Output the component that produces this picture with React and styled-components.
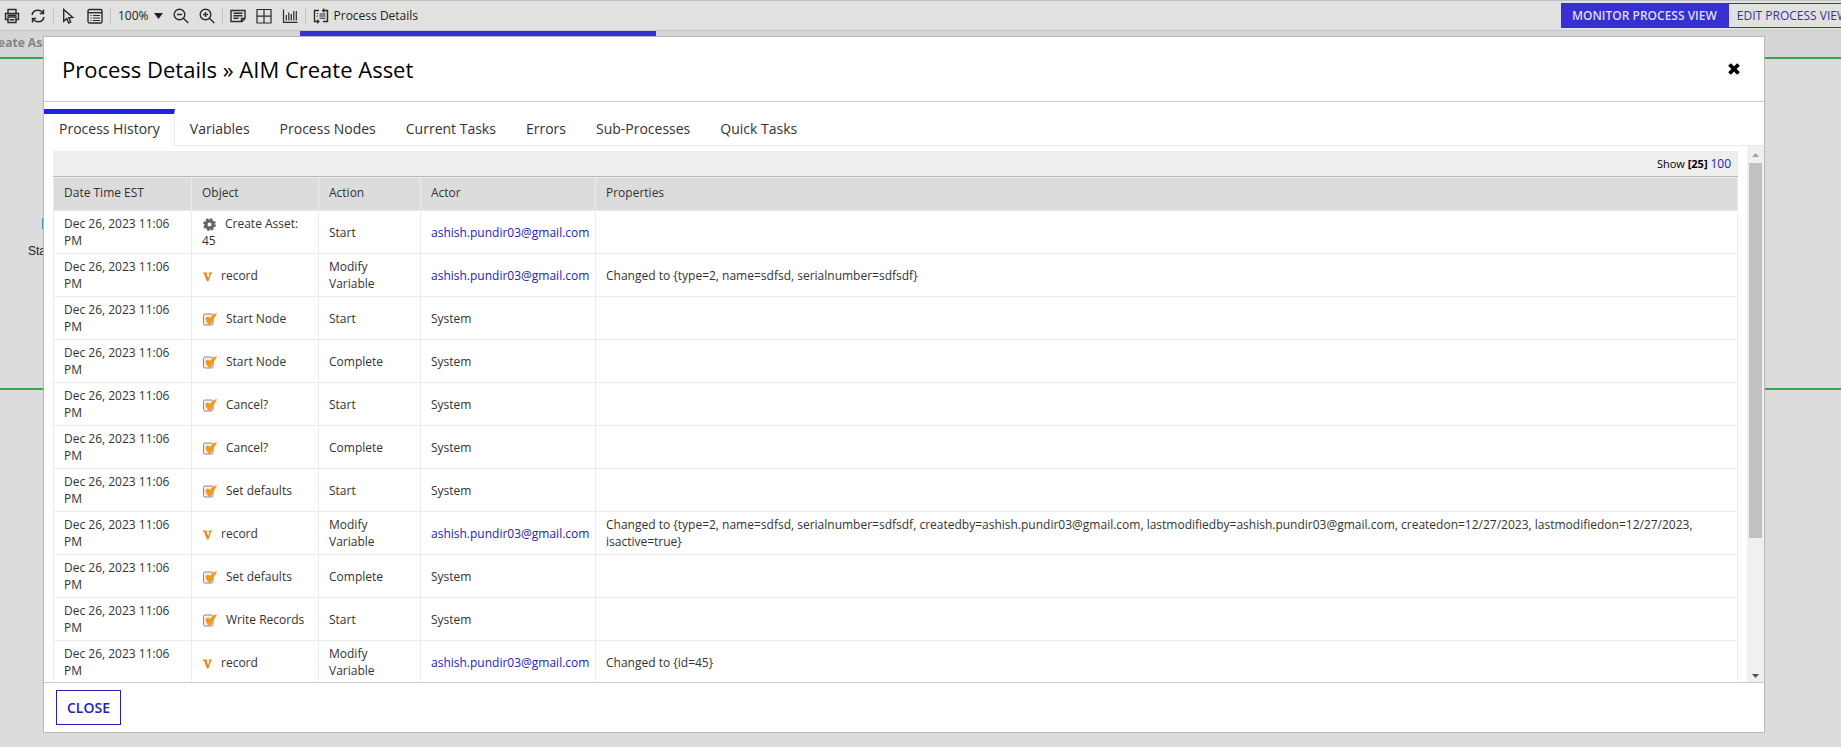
import { useState } from 'react';
import styled, { createGlobalStyle, css } from 'styled-components';

const colors = {
  blue: '#2322e2',
  link: '#2322b8',
  toolbar: '#e1e1e0',
  canvas: '#dcdcdc',
  line: '#b8b8b8',
  cell: '#ececec',
  text: '#333333',
};

const tabs = [
  'Process History',
  'Variables',
  'Process Nodes',
  'Current Tasks',
  'Errors',
  'Sub-Processes',
  'Quick Tasks',
];

const email = 'ashish.pundir03@gmail.com';

const rows = [
  { type: 'process', object: 'Create Asset: 45', action: 'Start', actor: email },
  {
    type: 'variable',
    object: 'record',
    action: 'Modify Variable',
    actor: email,
    properties: 'Changed to {type=2, name=sdfsd, serialnumber=sdfsdf}',
  },
  { type: 'node', object: 'Start Node', action: 'Start' },
  { type: 'node', object: 'Start Node', action: 'Complete' },
  { type: 'node', object: 'Cancel?', action: 'Start' },
  { type: 'node', object: 'Cancel?', action: 'Complete' },
  { type: 'node', object: 'Set defaults', action: 'Start' },
  {
    type: 'variable',
    object: 'record',
    action: 'Modify Variable',
    actor: email,
    properties:
      'Changed to {type=2, name=sdfsd, serialnumber=sdfsdf, createdby=ashish.pundir03@gmail.com, lastmodifiedby=ashish.pundir03@gmail.com, createdon=12/27/2023, lastmodifiedon=12/27/2023, isactive=true}',
  },
  { type: 'node', object: 'Set defaults', action: 'Complete' },
  { type: 'node', object: 'Write Records', action: 'Start' },
  {
    type: 'variable',
    object: 'record',
    action: 'Modify Variable',
    actor: email,
    properties: 'Changed to {id=45}',
  },
];

const GlobalStyle = createGlobalStyle`
  * {
    box-sizing: border-box;
  }

  body {
    margin: 0;
    overflow: hidden;
    font-family: 'Open Sans', sans-serif;
    font-size: 12px;
    color: ${colors.text};
    background: ${colors.canvas};
  }

  button {
    font-family: inherit;
    cursor: pointer;
  }
`;

const Page = styled.div`
  display: flex;
  flex-direction: column;
  height: 100vh;
`;

const Toolbar = styled.header`
  display: flex;
  align-items: center;
  justify-content: space-between;
  flex: none;
  height: 31px;
  overflow: hidden;
  background: ${colors.toolbar};
  border-top: 1px solid #c2c2c2;
  border-bottom: 1px solid #c6c6c6;
`;

const Tools = styled.div`
  display: flex;
  align-items: center;
  gap: 7px;
  padding-left: 4px;
`;

const ToolGroup = styled.div`
  display: flex;
  align-items: center;
  gap: 10px;
  padding-right: 7px;
  border-right: 1px solid #c6c6c6;

  &:last-child {
    border: 0;
  }
`;

const ToolButton = styled.button`
  display: flex;
  align-items: center;
  gap: 5px;
  padding: 0;
  border: 0;
  background: none;
  font-size: 12px;
  line-height: 16px;
  color: #222222;

  svg {
    display: block;
  }
`;

const Views = styled.div`
  display: flex;
  flex: none;
  height: 25px;
  margin-right: -16px;
`;

const ViewButton = styled.button`
  padding: 0 8px;
  border: 1px solid #3530cf;
  font-size: 12px;
  line-height: 16px;
  color: #3530b4;
  background: ${colors.toolbar};

  ${({ $active }) => $active && css`
    padding: 0 10px;
    font-weight: 600;
    color: #dedcf6;
    background: #3530cf;
  `}
`;

const Canvas = styled.main`
  flex: 1;
  display: flex;
  flex-direction: column;
  position: relative;
  overflow: hidden;
`;

const LaneTitle = styled.div`
  height: 26px;
  padding-top: 4px;
  background: #d6d6d6;
  font-weight: 700;
  line-height: 16px;
  color: #858585;

  span {
    display: block;
    width: 58px;
    margin-left: -15px;
    overflow: hidden;
    white-space: nowrap;
  }
`;

const Lane = styled.div`
  height: 333px;
  border: solid #2fa84f;
  border-width: 2px 0;
`;

const ActiveBar = styled.div`
  position: absolute;
  top: 0;
  left: 300px;
  width: 356px;
  height: 5px;
  background: #3530cf;
`;

const Node = styled.div`
  position: absolute;
  top: 187px;
  left: 28px;
  display: flex;
  flex-direction: column;
  gap: 14px;
  width: 15px;
  overflow: hidden;
  white-space: nowrap;
  font-family: 'Liberation Sans', sans-serif;
  font-size: 12px;
  line-height: 16px;
  color: #222222;

  i {
    align-self: flex-end;
    width: 1px;
    height: 11px;
    background: #4a90c0;
  }
`;

const Overlay = styled.div`
  position: fixed;
  inset: 0;
  display: flex;
  padding: 36px 76px 14px 43px;
`;

const Modal = styled.section`
  flex: 1;
  display: flex;
  flex-direction: column;
  min-width: 0;
  background: #ffffff;
  border: 1px solid ${colors.line};
`;

const ModalHeader = styled.div`
  display: flex;
  align-items: center;
  justify-content: space-between;
  height: 65px;
  padding: 0 24px 0 18px;
  border-bottom: 1px solid #cccccc;

  h1 {
    margin: 0;
    font-size: 22px;
    font-weight: 500;
    line-height: 28px;
    color: #000000;
  }
`;

const IconButton = styled.button`
  padding: 0;
  border: 0;
  background: none;

  svg {
    display: block;
  }
`;

const TabList = styled.div`
  display: flex;
  flex: none;
  margin-top: 7px;
  height: 37px;
  border-bottom: 1px solid ${colors.cell};
`;

const Tab = styled.button`
  height: 37px;
  padding: 0 15px 2px;
  border: 0;
  border-top: 5px solid transparent;
  background: none;
  font-size: 14px;
  line-height: 20px;
  color: ${colors.text};

  ${({ $active }) => $active && css`
    padding-right: 14px;
    border-top-color: ${colors.blue};
    border-right: 1px solid ${colors.cell};
    background: #ffffff;
  `}
`;

const Body = styled.div`
  flex: 1;
  display: flex;
  min-height: 0;
`;

const Panel = styled.div`
  flex: 1;
  min-width: 0;
  padding: 5px 9px 0;
  overflow: hidden;
`;

const Pager = styled.div`
  height: 26px;
  padding: 4px 7px 0;
  text-align: right;
  font-size: 11px;
  line-height: 17px;
  color: #000000;
  background: #eeeeee;
  border-bottom: 1px solid ${colors.line};

  a {
    font-size: 12px;
  }
`;

const Link = styled.a`
  color: ${colors.link};
  text-decoration: none;
  white-space: nowrap;
`;

const Table = styled.table`
  width: 100%;
  table-layout: fixed;
  border-collapse: collapse;

  th,
  td {
    height: 43px;
    padding: 4px 10px;
    border: 1px solid ${colors.cell};
    line-height: 17px;
    text-align: left;
    vertical-align: middle;
  }

  th {
    height: 33px;
    padding: 4px 10px 7px;
    font-weight: 500;
    background: #dcdcdc;
  }

  th:nth-child(1) {
    width: 138px;
  }

  th:nth-child(2) {
    width: 127px;
  }

  th:nth-child(3) {
    width: 102px;
  }

  th:nth-child(4) {
    width: 175px;
  }
`;

const TypeIcon = styled.svg`
  margin: 0 9px 0 1px;
  vertical-align: -3px;
`;

const ScrollTrack = styled.div`
  flex: none;
  display: flex;
  flex-direction: column;
  align-items: center;
  width: 17px;
  background: #f0f0f0;
`;

const ScrollArrow = styled.div`
  display: flex;
  align-items: center;
  justify-content: center;
  height: ${({ $disabled }) => ($disabled ? '17px' : '12px')};
  color: ${({ $disabled }) => ($disabled ? '#a3a3a3' : '#505050')};
`;

const ScrollSpace = styled.div`
  flex: 1;
  width: 13px;
`;

const ScrollThumb = styled.div`
  height: 74%;
  background: #c1c1c1;
`;

const ModalFooter = styled.div`
  height: 50px;
  padding: 7px 12px;
  border-top: 1px solid #cccccc;
`;

const CloseButton = styled.button`
  height: 35px;
  padding: 0 10px;
  border: 1px solid ${colors.link};
  background: #ffffff;
  font-size: 14px;
  font-weight: 600;
  line-height: 20px;
  color: ${colors.link};
`;

const Icon = ({ children }) => (
  <svg
    width='16'
    height='16'
    viewBox='0 0 16 16'
    fill='none'
    stroke='#2b2b2b'
    strokeWidth='1.4'
    aria-hidden='true'
  >
    {children}
  </svg>
);

const PrintIcon = () => (
  <Icon>
    <path d='M4 5V1.500h8V5M4 11.500H1.500v-6h13v6H12' />
    <path d='M4 9h8v5.500H4zM5.500 11.700h5M3.500 7.300h9' />
  </Icon>
);

const RefreshIcon = () => (
  <Icon>
    <path d='M2 7C2.600 4 5 2.200 8 2.200c2.200 0 4 1 5 2.800M13.500 1.500v4H9.800M14 9c-.6 3-3 4.800-6 4.800-2.200 0-4-1-5-2.800M2.500 14.500v-4h3.700' />
  </Icon>
);

const PointerIcon = () => (
  <Icon>
    <path d='M2.700 1.500v11.700l3-2.600 2 4.400 2-1-2-4.200 4-.3z' />
  </Icon>
);

const FormIcon = () => (
  <Icon>
    <rect x='1' y='1.500' width='14' height='13.500' rx='1.500' />
    <path d='M1 4.700h14' />
    <path d='M3.500 7.500h1.200M6 7.500h7M3.500 10h1.200M6 10h7M3.500 12.500h1.200M6 12.500h7' strokeWidth='1.100' />
  </Icon>
);

const ZoomIcon = ({ plus }) => (
  <Icon>
    <circle cx='6.500' cy='6.500' r='5.300' />
    <path d='M10.300 10.300L15.300 15M4 6.500h5' />
    {plus && <path d='M6.500 4v5' />}
  </Icon>
);

const NoteIcon = () => (
  <Icon>
    <path d='M1 2.500h14v8l-3 3H1zM14.500 10.500h-3v3M3.500 5.300h9M3.500 7.800h9M3.500 10.300h5' />
  </Icon>
);

const GridIcon = () => (
  <Icon>
    <path d='M1 1.500h14v13.500H1zM8 1.500V15M1 8.200h14' strokeWidth='1.200' />
  </Icon>
);

const ChartIcon = () => (
  <Icon>
    <path d='M1.500 1.500v12.800h14M4.300 12.500V7M6.800 12.500V4.500M9.300 12.500V6M11.800 12.500V3M14.300 12.500V3' strokeWidth='1.200' />
  </Icon>
);

const DetailsIcon = () => (
  <Icon>
    <path d='M6 2.500H1.500v11h4M10 13.500h4.500v-11H10' />
    <path d='M11.300 .6L9.500 2.500l1.800 1.900M4.200 11.600l1.800 1.900-1.800 1.900' strokeWidth='1.200' />
    <path d='M3.800 5.500H5M3.800 8H5M6.500 6h6M6.500 8h6M6.500 10.300h6' strokeWidth='1.100' />
  </Icon>
);

const objectIcons = {
  process: (
    <TypeIcon width='13' height='13' viewBox='0 0 13 13' aria-hidden='true'>
      <circle cx='6.500' cy='6.500' r='3.600' fill='none' stroke='#666666' strokeWidth='3.200' />
      <circle cx='6.500' cy='6.500' r='5.500' fill='none' stroke='#666666' strokeWidth='1.800' strokeDasharray='2.400 1.920' />
    </TypeIcon>
  ),
  variable: (
    <TypeIcon width='9' height='12' viewBox='0 0 9 12' aria-hidden='true'>
      <path d='M0 1.500h4.300v1.200H3.500L5.200 7 6.600 2.700H5.500V1.500H9v1.200H8.200L5.300 10.500H4L1 2.700H0z' fill='#e8891c' />
    </TypeIcon>
  ),
  node: (
    <TypeIcon width='14' height='13' viewBox='0 0 14 13' aria-hidden='true'>
      <rect x='.5' y='1' width='9.500' height='11' rx='1.500' fill='#f2efee' stroke='#8c8688' />
      <path d='M2.500 5.500c.6-2.300 3.400-2.300 4.300-.5C8.500 3.200 10.500 .8 14 0c-.6 3-3.200 5-4.400 8.200C8.600 10.700 7.500 11.800 6.500 11.800 4.800 11.300 3 8.500 2.500 5.500z' fill='#f39a1d' />
    </TypeIcon>
  ),
};

const App = () => {
  const [activeTab, setActiveTab] = useState(tabs[0]);

  return (
    <>
      <GlobalStyle />
      <Page>
        <Toolbar>
          <Tools>
            <ToolGroup>
              <ToolButton aria-label='Print'><PrintIcon /></ToolButton>
              <ToolButton aria-label='Refresh'><RefreshIcon /></ToolButton>
            </ToolGroup>
            <ToolGroup>
              <ToolButton aria-label='Select'><PointerIcon /></ToolButton>
              <ToolButton aria-label='Properties'><FormIcon /></ToolButton>
            </ToolGroup>
            <ToolGroup>
              <ToolButton>
                100%
                <svg width='9' height='6' viewBox='0 0 9 6' aria-hidden='true'>
                  <path d='M0 0h9L4.500 6z' fill='#222222' />
                </svg>
              </ToolButton>
              <ToolButton aria-label='Zoom out'><ZoomIcon /></ToolButton>
              <ToolButton aria-label='Zoom in'><ZoomIcon plus /></ToolButton>
            </ToolGroup>
            <ToolGroup>
              <ToolButton aria-label='Annotations'><NoteIcon /></ToolButton>
              <ToolButton aria-label='Grid'><GridIcon /></ToolButton>
              <ToolButton aria-label='Metrics'><ChartIcon /></ToolButton>
            </ToolGroup>
            <ToolGroup>
              <ToolButton><DetailsIcon />Process Details</ToolButton>
            </ToolGroup>
          </Tools>
          <Views>
            <ViewButton $active>MONITOR PROCESS VIEW</ViewButton>
            <ViewButton>EDIT PROCESS VIEW</ViewButton>
          </Views>
        </Toolbar>
        <Canvas>
          <LaneTitle><span>Create Asset</span></LaneTitle>
          <Lane />
          <ActiveBar />
          <Node><i />Start Node</Node>
        </Canvas>
      </Page>
      <Overlay>
        <Modal role='dialog' aria-labelledby='dialog-title'>
          <ModalHeader>
            <h1 id='dialog-title'>Process Details » AIM Create Asset</h1>
            <IconButton aria-label='Close dialog'>
              <svg width='12' height='12' viewBox='0 0 12 12' aria-hidden='true'>
                <path d='M1.500 1.500l9 9M10.500 1.500l-9 9' stroke='#000000' strokeWidth='3.800' />
              </svg>
            </IconButton>
          </ModalHeader>
          <TabList role='tablist'>
            {tabs.map(tab => (
              <Tab
                key={tab}
                role='tab'
                aria-selected={tab === activeTab}
                $active={tab === activeTab}
                onClick={() => setActiveTab(tab)}
              >
                {tab}
              </Tab>
            ))}
          </TabList>
          <Body>
            <Panel role='tabpanel'>
              <Pager>
                Show <b>[25]</b> <Link href='#100'>100</Link>
              </Pager>
              <Table>
                <thead>
                  <tr>
                    <th>Date Time EST</th>
                    <th>Object</th>
                    <th>Action</th>
                    <th>Actor</th>
                    <th>Properties</th>
                  </tr>
                </thead>
                <tbody>
                  {rows.map((row, index) => (
                    <tr key={index}>
                      <td>Dec 26, 2023 11:06 PM</td>
                      <td>
                        {objectIcons[row.type]}
                        {row.object}
                      </td>
                      <td>{row.action}</td>
                      <td>
                        {row.actor ? <Link href={`mailto:${row.actor}`}>{row.actor}</Link> : 'System'}
                      </td>
                      <td>{row.properties}</td>
                    </tr>
                  ))}
                </tbody>
              </Table>
            </Panel>
            <ScrollTrack>
              <ScrollArrow $disabled>
                <svg width='7' height='4' viewBox='0 0 7 4' aria-hidden='true'>
                  <path d='M0 4h7L3.500 0z' fill='currentColor' />
                </svg>
              </ScrollArrow>
              <ScrollSpace>
                <ScrollThumb />
              </ScrollSpace>
              <ScrollArrow>
                <svg width='7' height='4' viewBox='0 0 7 4' aria-hidden='true'>
                  <path d='M0 0h7L3.500 4z' fill='currentColor' />
                </svg>
              </ScrollArrow>
            </ScrollTrack>
          </Body>
          <ModalFooter>
            <CloseButton>CLOSE</CloseButton>
          </ModalFooter>
        </Modal>
      </Overlay>
    </>
  );
};

export default App;
